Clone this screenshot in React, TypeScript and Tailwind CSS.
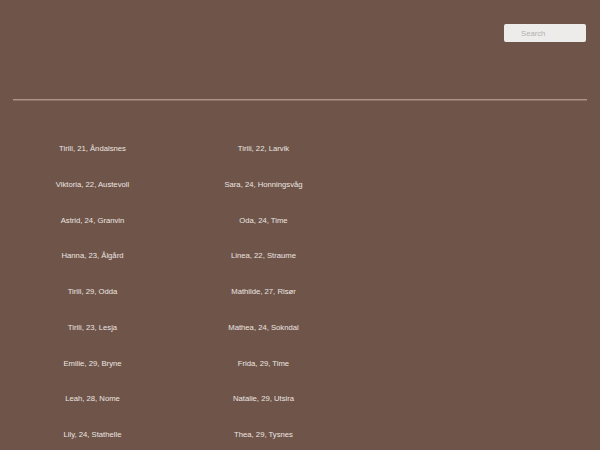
import React from 'react';

const people = [
  ['Tirili, 21, Åndalsnes', 'Tirili, 22, Larvik'],
  ['Viktoria, 22, Austevoll', 'Sara, 24, Honningsvåg'],
  ['Astrid, 24, Granvin', 'Oda, 24, Time'],
  ['Hanna, 23, Ålgård', 'Linea, 22, Straume'],
  ['Tirili, 29, Odda', 'Mathilde, 27, Risør'],
  ['Tirili, 23, Lesja', 'Mathea, 24, Sokndal'],
  ['Emilie, 29, Bryne', 'Frida, 29, Time'],
  ['Leah, 28, Nome', 'Natalie, 29, Utsira'],
  ['Lily, 24, Stathelle', 'Thea, 29, Tysnes'],
];

export default function App() {
  return (
    <div className="w-[600px] h-[450px] overflow-hidden bg-[#6f5549] font-['Liberation_Sans',Arial,sans-serif]">
      {/* header */}
      <div className="h-[99px] flex justify-end items-start pt-[24px] pr-[14px]">
        <input
          type="text"
          placeholder="Search"
          className="w-[82px] h-[18px] rounded-[2px] bg-[#eeeceb] pl-[17px] text-[7.7px] text-[#555] placeholder:text-[#b3b0ae] outline-none"
        />
      </div>
      <div className="mx-[13px] h-[2px] border-t border-[#ab958b] border-b border-b-[#8a7065]" />

      {/* list */}
      <div className="pt-[30px] pl-[7px] grid grid-cols-[171px_171px]">
        {people.map((row, i) => (
          <React.Fragment key={i}>
            {row.map((p) => (
              <div key={p} className="h-[35.75px] flex items-center justify-center text-[7.7px] text-[#ece4e0]">
                {p}
              </div>
            ))}
          </React.Fragment>
        ))}
      </div>
    </div>
  );
}
